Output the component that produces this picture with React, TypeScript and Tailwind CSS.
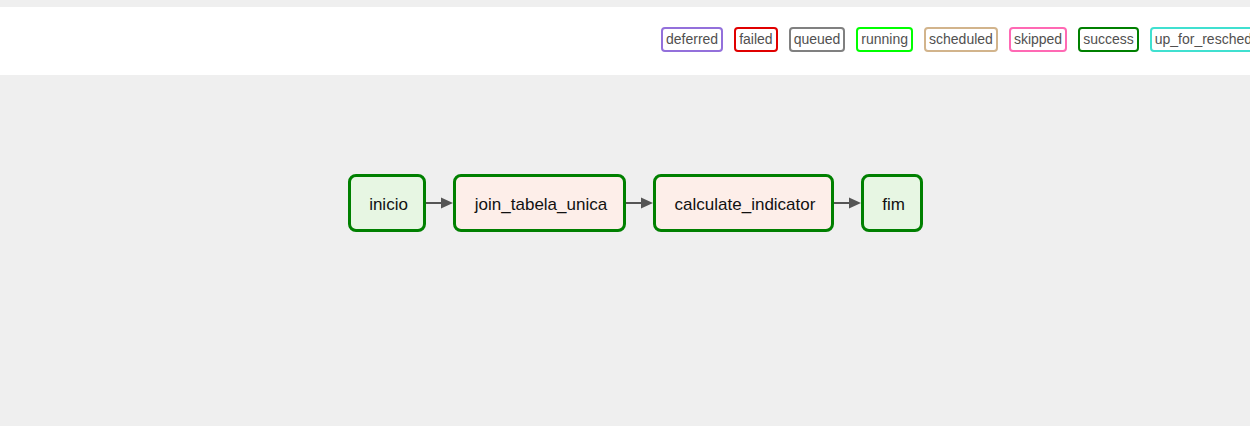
const legend = [
  { label: "deferred", border: "border-[#9370db]" },
  { label: "failed", border: "border-[#e00000]" },
  { label: "queued", border: "border-[#808080]" },
  { label: "running", border: "border-[#00ff00]" },
  { label: "scheduled", border: "border-[#d2b48c]" },
  { label: "skipped", border: "border-[#ff69b4]" },
  { label: "success", border: "border-[#008000]" },
  { label: "up_for_reschedule", border: "border-[#40e0d0]" },
];

const nodes = [
  { label: "inicio", width: "w-[78px]", fill: "bg-[#e7f6e3]" },
  { label: "join_tabela_unica", width: "w-[173px]", fill: "bg-[#fdeee9]" },
  { label: "calculate_indicator", width: "w-[181px]", fill: "bg-[#fdeee9]" },
  { label: "fim", width: "w-[62px]", fill: "bg-[#e7f6e3]" },
];

function Arrow() {
  return (
    <svg width="27" height="12" viewBox="0 0 27 12" className="shrink-0">
      <line x1="0" y1="6" x2="17" y2="6" stroke="#555" strokeWidth="2" />
      <path d="M15 0.5 L27 6 L15 11.5 Z" fill="#555" />
    </svg>
  );
}

export default function App() {
  return (
    <div className="min-h-screen bg-[#efefef] font-['Liberation_Sans',Arial,sans-serif] overflow-hidden">
      {/* Legend */}
      <div className="mt-[7px] h-[68px] bg-white flex items-start pt-[20px] overflow-hidden">
        <div className="flex gap-[11px] pl-[661px] shrink-0">
          {legend.map((s) => (
            <div
              key={s.label}
              className={`h-[25px] px-[3px] flex items-center border-2 rounded-[4px] text-[14px] text-[#51504f] whitespace-nowrap ${s.border}`}
            >
              {s.label}
            </div>
          ))}
        </div>
      </div>

      {/* Graph */}
      <div className="flex items-center pl-[348px] pt-[99px]">
        {nodes.map((n, i) => (
          <div key={n.label} className="flex items-center">
            {i > 0 && <Arrow />}
            <div
              className={`h-[58px] ${n.width} ${n.fill} border-[3px] border-[#008000] rounded-[8px] flex items-center justify-center pt-[4px] pl-[3px] text-[17px] text-[#111]`}
            >
              {n.label}
            </div>
          </div>
        ))}
      </div>
    </div>
  );
}
